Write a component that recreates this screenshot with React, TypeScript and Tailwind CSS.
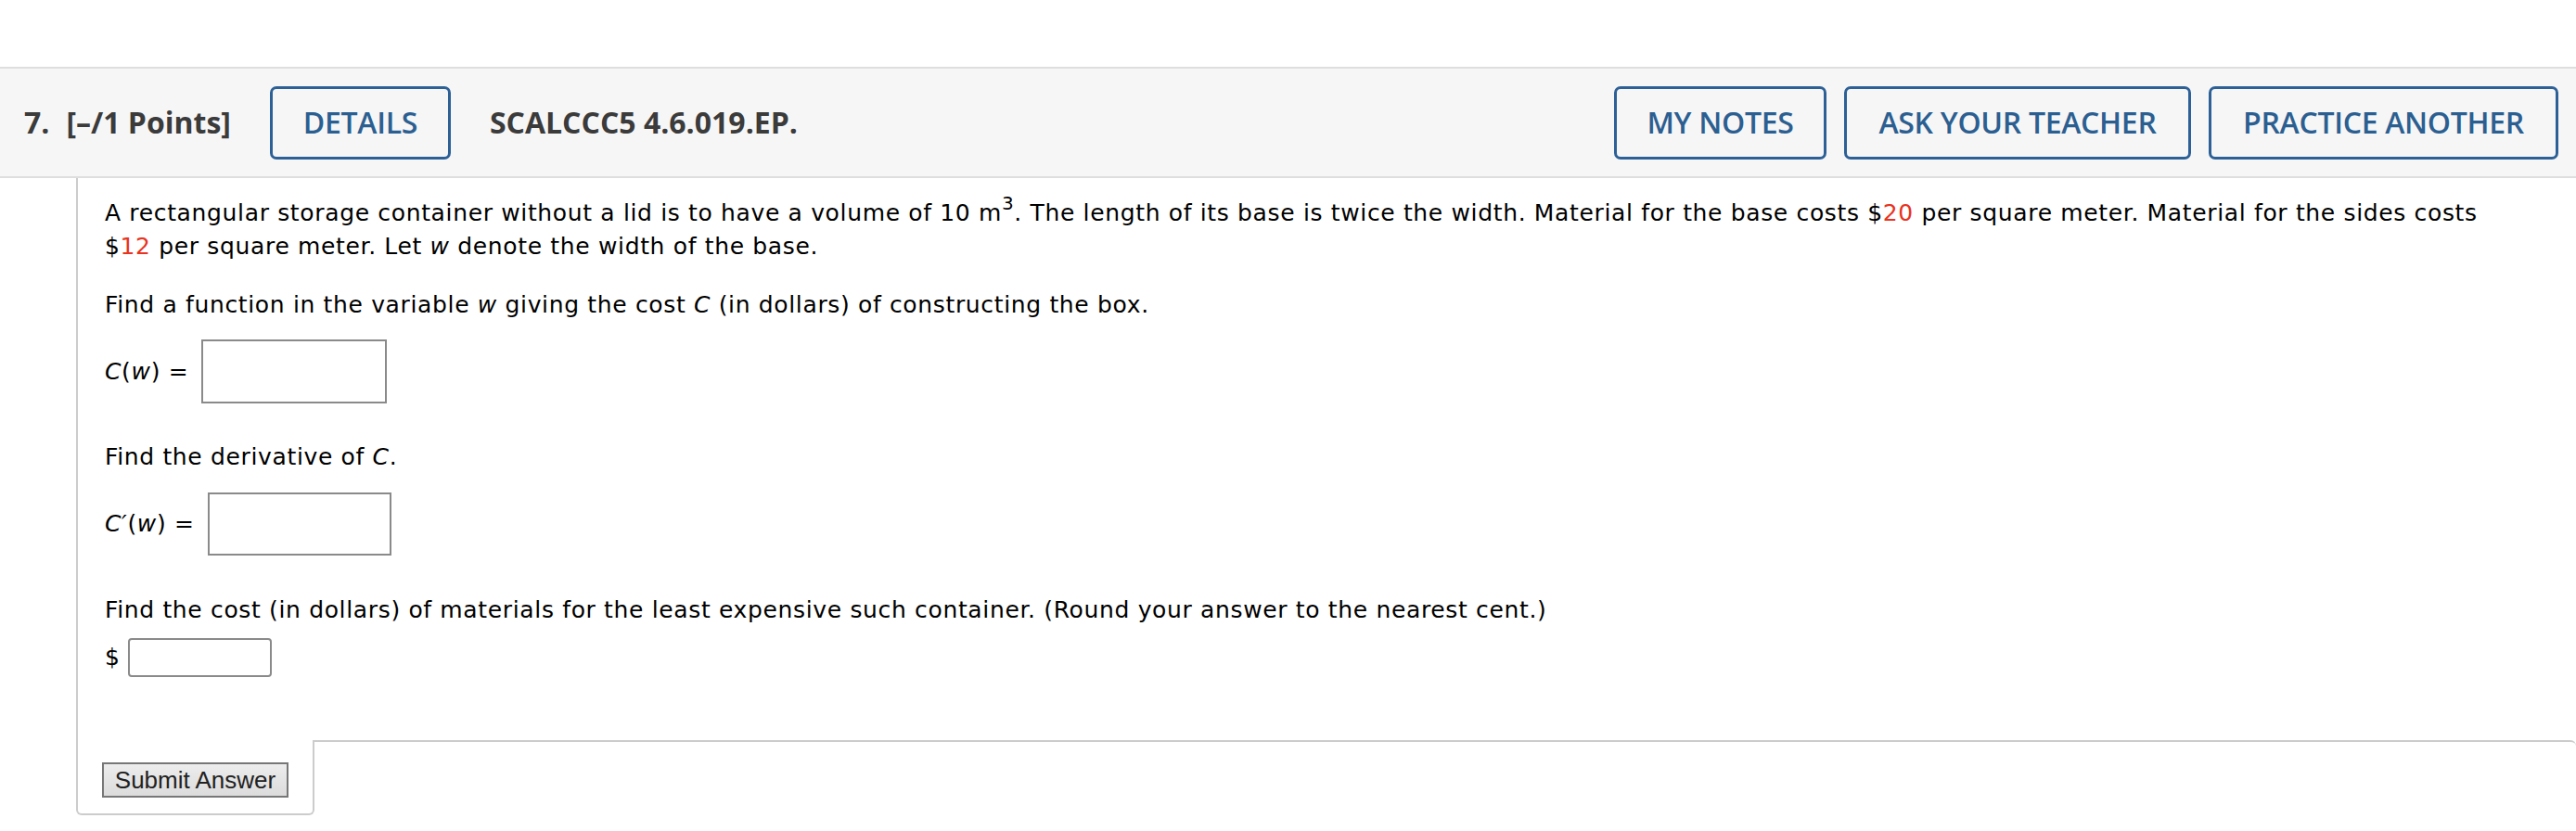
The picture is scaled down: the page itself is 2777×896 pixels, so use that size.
import React from "react";

const btn =
  "h-[79px] flex items-center justify-center border-[3px] border-[#2c6096] rounded-[7px] text-[#2c5f91] text-[32px] font-semibold tracking-[-0.3px] bg-[#f6f6f6]";

export default function App() {
  return (
    <div className="w-full min-h-[896px] bg-white" style={{ fontFamily: '"DejaVu Sans", Verdana, sans-serif' }}>
      <div className="h-[72px]" />
      <div
        className="h-[120px] border-y-2 border-[#dedede] bg-[#f6f6f6] flex items-center pl-[26px] pr-[19px]"
        style={{ fontFamily: '"Open Sans", sans-serif' }}
      >
        <div className="text-[32px] font-bold text-[#3b3b3b] flex gap-[18px]">
          <span>7.</span>
          <span>[–/1 Points]</span>
        </div>
        <div className={`${btn} ml-[42px] w-[195px]`}>DETAILS</div>
        <div className="ml-[42px] text-[32px] font-bold text-[#3b3b3b]">SCALCCC5 4.6.019.EP.</div>
        <div className="ml-auto flex gap-[19px]">
          <div className={`${btn} w-[229px]`}>MY NOTES</div>
          <div className={`${btn} w-[374px]`}>ASK YOUR TEACHER</div>
          <div className={`${btn} w-[377px]`}>PRACTICE ANOTHER</div>
        </div>
      </div>

      <div className="ml-[82px] border-l-2 border-[#cccccc] pl-[29px] pr-[100px] pt-[20px] pb-[68px] text-[25px] tracking-[0.65px] leading-[36px] text-black">
        <p>
          <span>A rectangular storage container without a lid is to have a volume of 10 m</span>
          <sup className="text-[20px] -top-[12px]">3</sup>
          <span>. The length of its base is twice the width. Material for the base costs </span>
          <span className="whitespace-nowrap">
            $<span className="text-[#e8331f]">20</span>
          </span>
          <span> per square meter. Material for the sides costs </span>
          <span className="whitespace-nowrap">
            $<span className="text-[#e8331f]">12</span>
          </span>
          <span> per square meter. Let </span>
          <i>w</i>
          <span> denote the width of the base.</span>
        </p>
        <p className="mt-[27px]">
          Find a function in the variable <i>w</i> giving the cost <i>C</i> (in dollars) of constructing the box.
        </p>
        <div className="mt-[19px] flex items-center h-[69px]">
          <span className="whitespace-pre">
            <i>C</i>(<i>w</i>) =
          </span>
          <div className="ml-[14px] w-[200px] h-[69px] border-2 border-[#8a8a8a]" />
        </div>
        <p className="mt-[40px]">
          Find the derivative of <i>C</i>.
        </p>
        <div className="mt-[20px] flex items-center h-[68px]">
          <span className="whitespace-pre">
            <i>C′</i>(<i>w</i>) =
          </span>
          <div className="ml-[14px] w-[198px] h-[68px] border-2 border-[#8a8a8a]" />
        </div>
        <p className="mt-[41px]">
          Find the cost (in dollars) of materials for the least expensive such container. (Round your answer to the nearest cent.)
        </p>
        <div className="mt-[12px] flex items-center h-[42px]">
          <span>$</span>
          <div className="ml-[8px] w-[155px] h-[42px] border-2 border-[#8a8a8a] rounded-[4px]" />
        </div>
      </div>

      <div className="ml-[82px] flex">
        <div className="w-[257px] h-[81px] border-l-2 border-r-2 border-b-2 border-[#cccccc] rounded-b-[6px] pl-[26px] pt-[24px]">
          <div
            className="w-[201px] h-[38px] border-2 border-[#777777] bg-gradient-to-b from-[#ededed] to-[#dcdcdc] flex items-center justify-center text-[26px] text-[#222]"
            style={{ fontFamily: '"Liberation Sans", Arial, sans-serif' }}
          >
            Submit Answer
          </div>
        </div>
        <div className="flex-1 h-[10px] border-t-2 border-[#cccccc] rounded-tr-[6px]" />
      </div>
    </div>
  );
}
